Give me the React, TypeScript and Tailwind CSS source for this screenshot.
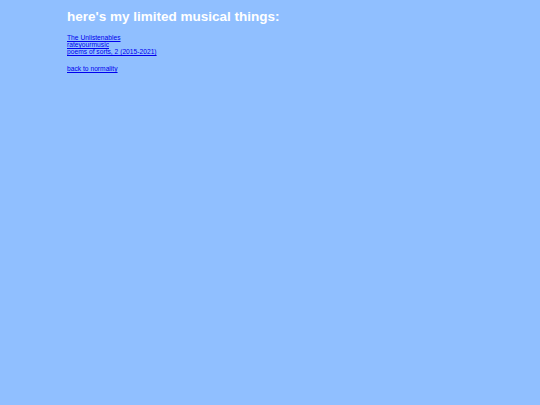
export default function App() {
  return (
    <div className="min-h-[405px] w-full bg-[#90bfff] font-['Liberation_Sans',Arial,sans-serif]">
      <div className="pl-[67px] pt-[8px]">
        <h1 className="text-[13.5px] font-bold leading-[18px] text-white">here's my limited musical things:</h1>
        <div className="mt-[8px] flex flex-col text-[6.7px] leading-[7px]">
          <a href="#" className="text-[#0000ee] underline">The Unlistenables</a>
          <a href="#" className="text-[#0000ee] underline">rateyourmusic</a>
          <a href="#" className="text-[#0000ee] underline">poems of sorts, 2 (2015-2021)</a>
        </div>
        <div className="mt-[10px] text-[6.7px] leading-[7px]">
          <a href="#" className="text-[#0000ee] underline">back to normality</a>
        </div>
      </div>
    </div>
  );
}
